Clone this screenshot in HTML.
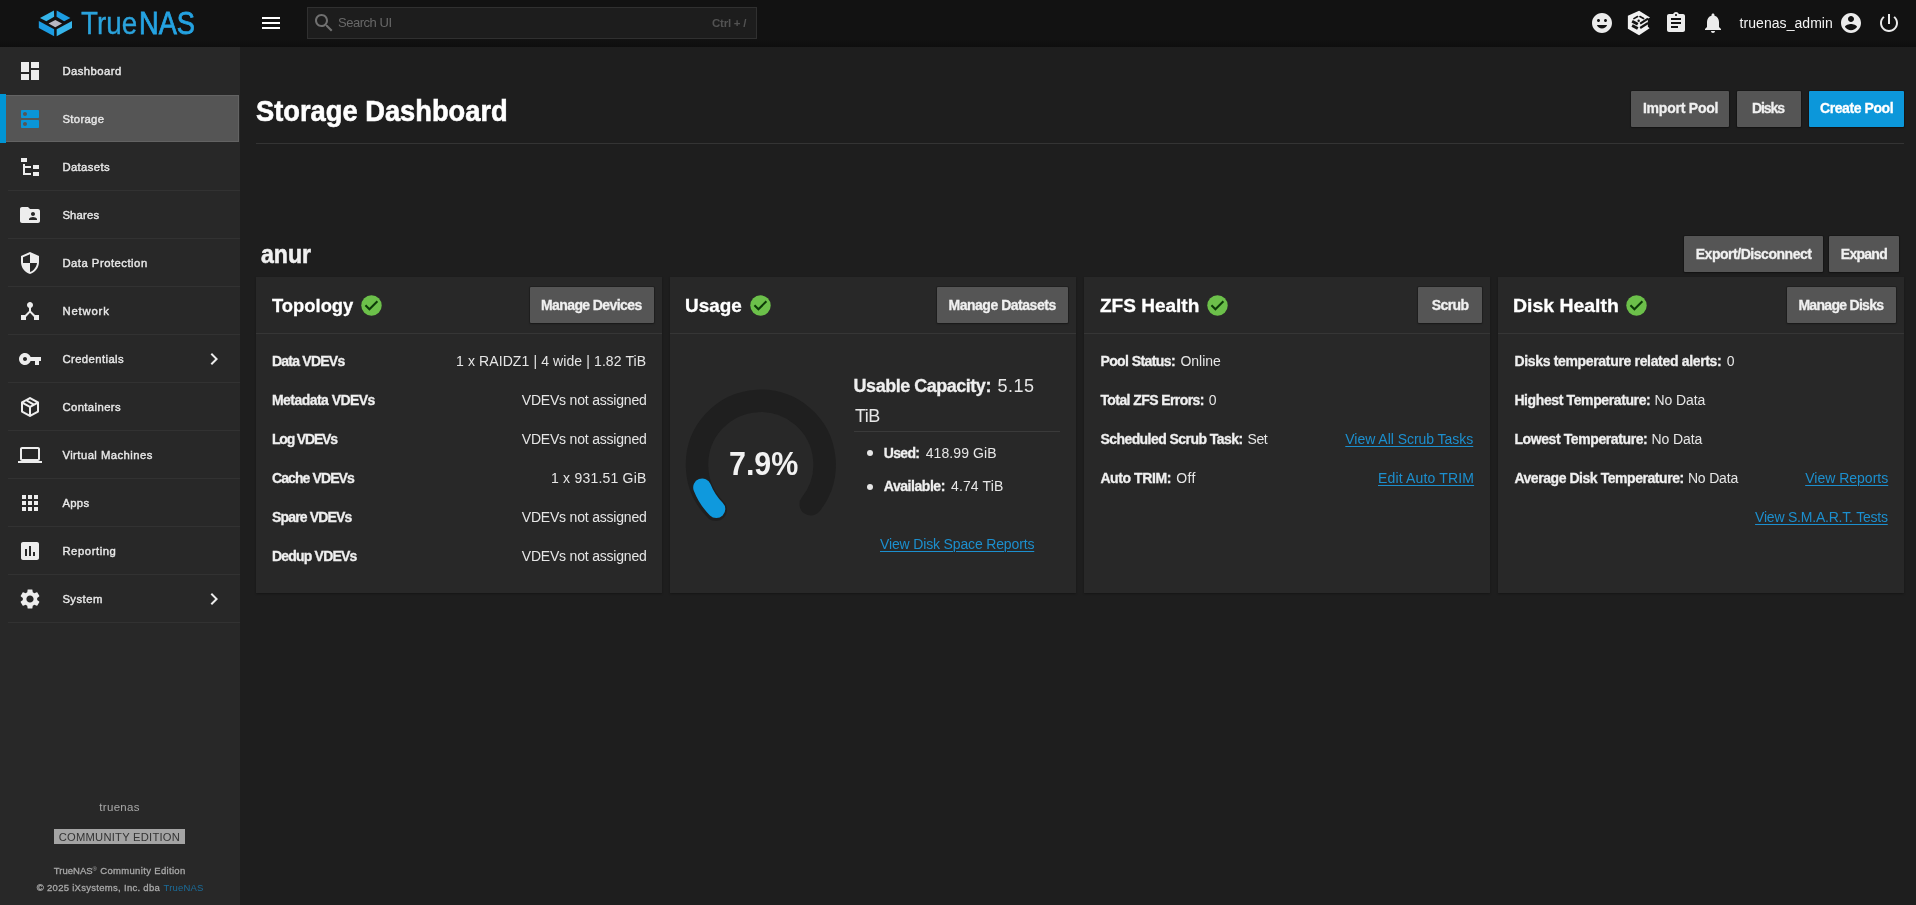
<!DOCTYPE html>
<html lang="en">
<head>
<meta charset="utf-8">
<title>TrueNAS - Storage Dashboard</title>
<style>
*{box-sizing:border-box;margin:0;padding:0}
html,body{width:1916px;height:905px;overflow:hidden;background:#1e1e1e;font-family:"Liberation Sans",sans-serif;color:#fff}
svg{display:block}
.abs{position:absolute}
.t{position:absolute;white-space:pre;line-height:1;font-family:"Liberation Sans",sans-serif}
.t.lk{text-decoration:underline;text-decoration-thickness:1px;text-underline-offset:2px}
#topbar{position:absolute;left:0;top:0;width:1916px;height:47px;background:linear-gradient(#121212 0,#121212 39px,#0e0e0e 47px)}
#search{position:absolute;left:307px;top:7px;width:450px;height:32px;background:#1d1d1d;border:1px solid #303030}
#sidebar{position:absolute;left:0;top:47px;width:240px;height:858px;background:#282828}
.ln{position:absolute;left:8px;width:232px;height:1px;background:#323232}
.ic{position:absolute;left:18px;width:24px;height:24px;fill:#ededed}
.navsel{position:absolute;left:0;width:239px;height:47px;background:#555;box-shadow:inset 0 0 0 1px #636363}
.navsel .bar{position:absolute;left:0;top:-1px;width:6px;height:49px;background:#0095d5}
#edition{position:absolute;left:54px;top:829px;width:131px;height:15px;background:#a4a4a4}
#hr{position:absolute;left:256px;top:143px;width:1648px;height:1px;background:#343434}
.btn{position:absolute;height:36px;background:#555;border-radius:1px;box-shadow:0 0 0 1px rgba(0,0,0,.16),0 1px 2px rgba(0,0,0,.3)}
.btn.pri{background:#0c97da}
.card{position:absolute;top:277px;width:406px;height:316px;background:#282828;box-shadow:0 1px 2px rgba(0,0,0,.3)}
.card .hd{position:absolute;left:0;top:56px;width:406px;height:1px;background:#363636}
#txt{position:absolute;left:0;top:0;width:1916px;height:905px;will-change:transform}
</style>
</head>
<body>
<div id="topbar">
  <svg class="abs" style="left:30px;top:2px" width="50" height="42" viewBox="0 0 1077 905">
    <polygon points="215,345 515,185 520,318 352,415" fill="#36b5ea"/>
    <polygon points="575,185 870,345 735,415 572,318" fill="#1c9ce2"/>
    <polygon points="190,410 520,585 520,738 190,562" fill="#1c9ce2"/>
    <polygon points="575,585 905,410 905,562 575,738" fill="#36b5ea"/>
    <polygon points="400,465 545,387 690,465 545,545" fill="#b8b8c2"/>
  </svg>
  <svg class="abs" style="left:259px;top:11px;fill:#fff" width="24" height="24" viewBox="0 0 24 24"><path d="M3 18h18v-2H3v2zm0-5h18v-2H3v2zm0-7v2h18V6H3z"/></svg>
  <div id="search">
    <svg class="abs" style="left:4px;top:3px;fill:#707070" width="24" height="24" viewBox="0 0 24 24"><path d="M15.5 14h-.79l-.28-.27C15.41 12.59 16 11.11 16 9.5 16 5.91 13.09 3 9.5 3S3 5.91 3 9.5 5.91 16 9.5 16c1.61 0 3.09-.59 4.23-1.57l.27.28v.79l5 4.99L20.49 19l-4.99-5zm-6 0C7.01 14 5 11.99 5 9.5S7.01 5 9.5 5 14 7.01 14 9.5 11.99 14 9.5 14z"/></svg>
  </div>
  <svg class="abs" style="left:1590px;top:11px;fill:#ececec" width="24" height="24" viewBox="0 0 24 24"><path d="M11.99 2C6.47 2 2 6.48 2 12s4.47 10 9.99 10C17.52 22 22 17.52 22 12S17.52 2 11.99 2zM8.5 8c.83 0 1.5.67 1.5 1.5S9.33 11 8.5 11 7 10.33 7 9.5 7.67 8 8.5 8zm3.500 9.500c-2.330 0-4.320-1.450-5.120-3.500h10.240c-.8 2.050-2.790 3.500-5.120 3.500zm3.500-6.500c-.83 0-1.500-.67-1.500-1.500S14.670 8 15.500 8s1.500.67 1.500 1.500-.67 1.500-1.500 1.500z"/></svg>
  <svg class="abs" style="left:1620px;top:4px" width="40" height="36" viewBox="0 0 1006 905">
    <polygon points="480,172 755,338 700,372 700,575 745,612 480,785 198,622 198,298" fill="#f2f2f2"/>
    <g fill="none" stroke="#141414">
      <path d="M350 368L442 316M502 316L592 366" stroke-width="42" stroke-linecap="round"/>
      <path d="M305 432L447 508M305 542L447 618" stroke-width="72"/>
      <path d="M507 492L705 368M507 602L705 478" stroke-width="56"/>
    </g>
    <circle cx="470" cy="420" r="30" fill="#141414"/>
  </svg>
  <svg class="abs" style="left:1664px;top:11px;fill:#ececec" width="24" height="24" viewBox="0 0 24 24"><path d="M19 3h-4.180C14.400 1.840 13.300 1 12 1c-1.300 0-2.400.84-2.820 2H5c-1.100 0-2 .9-2 2v14c0 1.100.9 2 2 2h14c1.100 0 2-.9 2-2V5c0-1.100-.9-2-2-2zm-7 0c.55 0 1 .45 1 1s-.45 1-1 1-1-.45-1-1 .45-1 1-1zm2 14H7v-2h7v2zm3-4H7v-2h10v2zm0-4H7V7h10v2z"/></svg>
  <svg class="abs" style="left:1701px;top:11px;fill:#ececec" width="24" height="24" viewBox="0 0 24 24"><path d="M12 22c1.100 0 2-.9 2-2h-4c0 1.100.89 2 2 2zm6-6v-5c0-3.070-1.640-5.640-4.500-6.320V4c0-.83-.67-1.500-1.500-1.500s-1.500.67-1.500 1.500v.68C7.630 5.360 6 7.920 6 11v5l-2 2v1h16v-1l-2-2z"/></svg>
  <svg class="abs" style="left:1839px;top:11px;fill:#ececec" width="24" height="24" viewBox="0 0 24 24"><path d="M12 2C6.480 2 2 6.480 2 12s4.480 10 10 10 10-4.480 10-10S17.520 2 12 2zm0 3c1.660 0 3 1.340 3 3s-1.340 3-3 3-3-1.340-3-3 1.340-3 3-3zm0 14.200c-2.500 0-4.710-1.280-6-3.220.03-1.990 4-3.080 6-3.080 1.990 0 5.970 1.090 6 3.080-1.290 1.940-3.500 3.220-6 3.220z"/></svg>
  <svg class="abs" style="left:1877px;top:11px;fill:#ececec" width="24" height="24" viewBox="0 0 24 24"><path d="M13 3h-2v10h2V3zm4.830 2.170l-1.420 1.420C17.990 7.860 19 9.810 19 12c0 3.870-3.130 7-7 7s-7-3.130-7-7c0-2.190 1.010-4.140 2.580-5.420L6.170 5.170C4.230 6.820 3 9.260 3 12c0 4.970 4.030 9 9 9s9-4.030 9-9c0-2.740-1.230-5.180-3.170-6.830z"/></svg>
</div>
<div id="sidebar"></div>
<svg class="ic" style="top:59px;fill:#ededed" viewBox="0 0 24 24"><path d="M3 13h8V3H3v10zm0 8h8v-6H3v6zm10 0h8V11h-8v10zm0-18v6h8V3h-8z"/></svg>
<div class="navsel" style="top:95px"><div class="bar"></div></div>
<svg class="ic" style="top:107px;fill:#0a95d7" viewBox="0 0 24 24"><path d="M20 13H4c-.55 0-1 .45-1 1v6c0 .55.45 1 1 1h16c.55 0 1-.45 1-1v-6c0-.55-.45-1-1-1zM7 19c-1.1 0-2-.9-2-2s.9-2 2-2 2 .9 2 2-.9 2-2 2zM20 3H4c-.55 0-1 .45-1 1v6c0 .55.45 1 1 1h16c.55 0 1-.45 1-1V4c0-.55-.45-1-1-1zM7 9c-1.1 0-2-.9-2-2s.9-2 2-2 2 .9 2 2-.9 2-2 2z"/></svg>
<svg class="ic" style="top:155px;fill:#ededed" viewBox="0 0 24 24"><path d="M3,3H9V7H3V3M15,10H21V14H15V10M15,17H21V21H15V17M13,13H7V18H13V20H7L5,20V9H7V11H13V13Z"/></svg>
<div class="ln" style="top:190px"></div>
<svg class="ic" style="top:203px;fill:#ededed" viewBox="0 0 24 24"><path d="M20 6h-8l-2-2H4c-1.1 0-1.99.9-1.99 2L2 18c0 1.1.9 2 2 2h16c1.1 0 2-.9 2-2V8c0-1.1-.9-2-2-2zm-5 3c1.1 0 2 .9 2 2s-.9 2-2 2-2-.9-2-2 .9-2 2-2zm4 8h-8v-1c0-1.33 2.67-2 4-2s4 .67 4 2v1z"/></svg>
<div class="ln" style="top:238px"></div>
<svg class="ic" style="top:251px;fill:#ededed" viewBox="0 0 24 24"><path d="M12 1L3 5v6c0 5.55 3.84 10.74 9 12 5.16-1.26 9-6.45 9-12V5l-9-4zm0 10.99h7c-.53 4.12-3.28 7.79-7 8.94V12H5V6.3l7-3.11v8.8z"/></svg>
<div class="ln" style="top:286px"></div>
<svg class="ic" style="top:299px;fill:#ededed" viewBox="0 0 24 24"><path d="M17 16l-4-4V8.82C14.16 8.4 15 7.3 15 6c0-1.66-1.34-3-3-3S9 4.34 9 6c0 1.3.84 2.4 2 2.82V12l-4 4H3v5h5v-3.05l4-4.2 4 4.2V21h5v-5h-4z"/></svg>
<div class="ln" style="top:334px"></div>
<svg class="ic" style="top:347px;fill:#ededed" viewBox="0 0 24 24"><path d="M12.65 10C11.83 7.67 9.61 6 7 6c-3.31 0-6 2.69-6 6s2.69 6 6 6c2.61 0 4.83-1.67 5.65-4H17v4h4v-4h2v-4H12.65zM7 14c-1.1 0-2-.9-2-2s.9-2 2-2 2 .9 2 2-.9 2-2 2z"/></svg>
<svg class="ic" style="left:202px;top:347px" viewBox="0 0 24 24"><path d="M10 6L8.59 7.41 13.17 12l-4.58 4.59L10 18l6-6z"/></svg>
<div class="ln" style="top:382px"></div>
<svg class="ic" style="top:395px;fill:#ededed" viewBox="0 0 24 24"><path d="M21,16.5C21,16.88 20.79,17.21 20.47,17.38L12.57,21.82C12.41,21.94 12.21,22 12,22C11.79,22 11.59,21.94 11.43,21.82L3.53,17.38C3.21,17.21 3,16.88 3,16.5V7.5C3,7.12 3.21,6.79 3.53,6.62L11.43,2.18C11.59,2.06 11.79,2 12,2C12.21,2 12.41,2.06 12.57,2.18L20.47,6.62C20.79,6.79 21,7.12 21,7.5V16.5M12,4.15L10.11,5.22L16,8.61L17.96,7.5L12,4.15M6.04,7.5L12,10.85L13.96,9.75L8.08,6.35L6.04,7.5M5,15.91L11,19.29V12.58L5,9.21V15.91M19,15.91V9.21L13,12.58V19.29L19,15.91Z"/></svg>
<div class="ln" style="top:430px"></div>
<svg class="ic" style="top:443px;fill:#ededed" viewBox="0 0 24 24"><path d="M20 18c1.1 0 1.99-.9 1.99-2L22 6c0-1.1-.9-2-2-2H4c-1.1 0-2 .9-2 2v10c0 1.1.9 2 2 2H0v2h24v-2h-4zM4 6h16v10H4V6z"/></svg>
<div class="ln" style="top:478px"></div>
<svg class="ic" style="top:491px;fill:#ededed" viewBox="0 0 24 24"><path d="M4 8h4V4H4v4zm6 12h4v-4h-4v4zm-6 0h4v-4H4v4zm0-6h4v-4H4v4zm6 0h4v-4h-4v4zm6-10v4h4V4h-4zm-6 4h4V4h-4v4zm6 6h4v-4h-4v4zm0 6h4v-4h-4v4z"/></svg>
<div class="ln" style="top:526px"></div>
<svg class="ic" style="top:539px;fill:#ededed" viewBox="0 0 24 24"><path d="M19 3H5c-1.1 0-2 .9-2 2v14c0 1.1.9 2 2 2h14c1.1 0 2-.9 2-2V5c0-1.1-.9-2-2-2zM9 17H7v-7h2v7zm4 0h-2V7h2v10zm4 0h-2v-4h2v4z"/></svg>
<div class="ln" style="top:574px"></div>
<svg class="ic" style="top:587px;fill:#ededed" viewBox="0 0 24 24"><path d="M19.14 12.94c.04-.3.06-.61.06-.94 0-.32-.02-.64-.07-.94l2.03-1.58c.18-.14.23-.41.12-.61l-1.92-3.32c-.12-.22-.37-.29-.59-.22l-2.39.96c-.5-.38-1.03-.7-1.62-.94l-.36-2.54c-.04-.24-.24-.41-.48-.41h-3.84c-.24 0-.43.17-.47.41l-.36 2.54c-.59.24-1.13.57-1.62.94l-2.39-.96c-.22-.08-.47 0-.59.22L2.74 8.87c-.12.21-.08.47.12.61l2.03 1.58c-.05.3-.09.63-.09.94s.02.64.07.94l-2.03 1.58c-.18.14-.23.41-.12.61l1.92 3.32c.12.22.37.29.59.22l2.39-.96c.5.38 1.03.7 1.62.94l.36 2.54c.05.24.24.41.48.41h3.84c.24 0 .44-.17.47-.41l.36-2.54c.59-.24 1.13-.56 1.62-.94l2.39.96c.22.08.47 0 .59-.22l1.92-3.32c.12-.22.07-.47-.12-.61l-2.01-1.58zM12 15.6c-1.98 0-3.6-1.62-3.6-3.6s1.62-3.6 3.6-3.6 3.6 1.62 3.6 3.6-1.62 3.6-3.6 3.6z"/></svg>
<svg class="ic" style="left:202px;top:587px" viewBox="0 0 24 24"><path d="M10 6L8.59 7.41 13.17 12l-4.58 4.59L10 18l6-6z"/></svg>
<div class="ln" style="top:622px"></div>
<div id="edition"></div>
<div id="hr"></div>
<div class="btn" style="left:1631px;top:91px;width:98px"></div>
<div class="btn" style="left:1737px;top:91px;width:64px"></div>
<div class="btn pri" style="left:1809px;top:91px;width:95px"></div>
<div class="btn" style="left:1684px;top:236px;width:139px"></div>
<div class="btn" style="left:1829px;top:236px;width:70px"></div>
<div class="card" style="left:256px"><div class="hd"></div></div>
<div class="card" style="left:670px"><div class="hd"></div></div>
<div class="card" style="left:1084px"><div class="hd"></div></div>
<div class="card" style="left:1498px"><div class="hd"></div></div>
<div class="btn" style="left:530px;top:287px;width:124px"></div>
<div class="btn" style="left:937px;top:287px;width:131px"></div>
<div class="btn" style="left:1418px;top:287px;width:64px"></div>
<div class="btn" style="left:1787px;top:287px;width:109px"></div>
<svg class="abs" style="left:359.4px;top:292.7px" width="25" height="25" viewBox="0 0 24 24"><circle cx="12" cy="12" r="9.8" fill="#6cc04a"/><circle cx="12" cy="12" r="8.1" fill="none" stroke="#2f7a22" stroke-width="0"/><path d="M6.2 11.8L10 15.55 17.66 7.97" fill="none" stroke="#0d3a08" stroke-width="2"/></svg>
<svg class="abs" style="left:747.6px;top:292.7px" width="25" height="25" viewBox="0 0 24 24"><circle cx="12" cy="12" r="9.8" fill="#6cc04a"/><circle cx="12" cy="12" r="8.1" fill="none" stroke="#2f7a22" stroke-width="0"/><path d="M6.2 11.8L10 15.55 17.66 7.97" fill="none" stroke="#0d3a08" stroke-width="2"/></svg>
<svg class="abs" style="left:1205.1px;top:292.7px" width="25" height="25" viewBox="0 0 24 24"><circle cx="12" cy="12" r="9.8" fill="#6cc04a"/><circle cx="12" cy="12" r="8.1" fill="none" stroke="#2f7a22" stroke-width="0"/><path d="M6.2 11.8L10 15.55 17.66 7.97" fill="none" stroke="#0d3a08" stroke-width="2"/></svg>
<svg class="abs" style="left:1623.8px;top:292.7px" width="25" height="25" viewBox="0 0 24 24"><circle cx="12" cy="12" r="9.8" fill="#6cc04a"/><circle cx="12" cy="12" r="8.1" fill="none" stroke="#2f7a22" stroke-width="0"/><path d="M6.2 11.8L10 15.55 17.66 7.97" fill="none" stroke="#0d3a08" stroke-width="2"/></svg>
<svg class="abs" style="left:0;top:0" width="1916" height="905" viewBox="0 0 1916 905"><path d="M715.69 509.71A63.8 63.8 0 1 1 810.73 504.32" fill="none" stroke="#1f1f1f" stroke-width="22.5" stroke-linecap="round"/><path d="M716.32 509.08A62.9 62.9 0 0 1 702.20 487.45" fill="none" stroke="#0f99dd" stroke-width="18" stroke-linecap="round"/></svg>
<div class="abs" style="left:854px;top:431px;width:206px;height:1px;background:#3a3a3a"></div>
<div class="abs" style="left:867.3px;top:450.3px;width:6px;height:6px;border-radius:3px;background:#e6e6e6"></div>
<div class="abs" style="left:867.3px;top:483.6px;width:6px;height:6px;border-radius:3px;background:#e6e6e6"></div>
<div id="txt">
<span class="t" style="left:80.80px;top:6px;line-height:35px;font-size:31px;transform:scaleX(0.8965);transform-origin:0 0;color:#2ba3dc;-webkit-text-stroke:0.35px #2ba3dc;">True</span>
<span class="t" style="left:139.24px;top:6px;line-height:35px;font-size:31px;transform:scaleX(0.8778);transform-origin:0 0;color:#25a3e2;-webkit-text-stroke:0.8px #25a3e2;">NAS</span>
<span class="t" style="left:338.00px;top:15px;line-height:15px;font-size:13px;letter-spacing:-0.474px;color:#686868;">Search UI</span>
<span class="t" style="left:712.00px;top:17px;line-height:12px;font-size:11.5px;font-weight:bold;letter-spacing:-0.230px;color:#525252;-webkit-text-stroke:0;">Ctrl + /</span>
<span class="t" style="left:1739.60px;top:15px;line-height:16px;font-size:14px;letter-spacing:0.048px;color:#f4f4f4;">truenas_admin</span>
<span class="t" style="left:62.40px;top:65px;line-height:12px;font-size:11.3px;letter-spacing:0.452px;color:#e8e8e8;-webkit-text-stroke:0.4px #e8e8e8;">Dashboard</span>
<span class="t" style="left:62.40px;top:113px;line-height:12px;font-size:11.3px;letter-spacing:0.344px;color:#e8e8e8;-webkit-text-stroke:0.4px #e8e8e8;">Storage</span>
<span class="t" style="left:62.40px;top:161px;line-height:12px;font-size:11.3px;letter-spacing:0.381px;color:#e8e8e8;-webkit-text-stroke:0.4px #e8e8e8;">Datasets</span>
<span class="t" style="left:62.40px;top:209px;line-height:12px;font-size:11.3px;letter-spacing:0.171px;color:#e8e8e8;-webkit-text-stroke:0.4px #e8e8e8;">Shares</span>
<span class="t" style="left:62.40px;top:257px;line-height:12px;font-size:11.3px;letter-spacing:0.494px;color:#e8e8e8;-webkit-text-stroke:0.4px #e8e8e8;">Data Protection</span>
<span class="t" style="left:62.40px;top:305px;line-height:12px;font-size:11.3px;letter-spacing:0.836px;color:#e8e8e8;-webkit-text-stroke:0.4px #e8e8e8;">Network</span>
<span class="t" style="left:62.40px;top:353px;line-height:12px;font-size:11.3px;letter-spacing:0.411px;color:#e8e8e8;-webkit-text-stroke:0.4px #e8e8e8;">Credentials</span>
<span class="t" style="left:62.40px;top:401px;line-height:12px;font-size:11.3px;letter-spacing:0.402px;color:#e8e8e8;-webkit-text-stroke:0.4px #e8e8e8;">Containers</span>
<span class="t" style="left:62.40px;top:449px;line-height:12px;font-size:11.3px;letter-spacing:0.446px;color:#e8e8e8;-webkit-text-stroke:0.4px #e8e8e8;">Virtual Machines</span>
<span class="t" style="left:62.40px;top:497px;line-height:12px;font-size:11.3px;letter-spacing:0.300px;color:#e8e8e8;-webkit-text-stroke:0.4px #e8e8e8;">Apps</span>
<span class="t" style="left:62.40px;top:545px;line-height:12px;font-size:11.3px;letter-spacing:0.563px;color:#e8e8e8;-webkit-text-stroke:0.4px #e8e8e8;">Reporting</span>
<span class="t" style="left:62.40px;top:593px;line-height:12px;font-size:11.3px;letter-spacing:0.449px;color:#e8e8e8;-webkit-text-stroke:0.4px #e8e8e8;">System</span>
<span class="t" style="left:99.30px;top:801px;line-height:12px;font-size:11.5px;letter-spacing:0.315px;color:#a8a8a8;">truenas</span>
<span class="t" style="left:58.70px;top:831px;line-height:12px;font-size:11.2px;letter-spacing:0.245px;color:#333;">COMMUNITY EDITION</span>
<span class="t" style="left:53.70px;top:865px;line-height:11px;font-size:9.5px;letter-spacing:0.037px;color:#a8a8a8;-webkit-text-stroke:0.3px #a8a8a8;">TrueNAS</span>
<span class="t" style="left:92.60px;top:866px;line-height:6px;font-size:6px;color:#a8a8a8;">®</span>
<span class="t" style="left:100.20px;top:865px;line-height:11px;font-size:9.5px;letter-spacing:0.335px;color:#a8a8a8;-webkit-text-stroke:0.3px #a8a8a8;">Community Edition</span>
<span class="t" style="left:36.80px;top:882px;line-height:11px;font-size:9.5px;letter-spacing:0.288px;color:#a8a8a8;-webkit-text-stroke:0.3px #a8a8a8;">© 2025 iXsystems, Inc. dba</span>
<span class="t" style="left:163.50px;top:882px;line-height:11px;font-size:9.5px;letter-spacing:0.187px;color:#1b6d9b;">TrueNAS</span>
<span class="t" style="left:256.20px;top:95px;line-height:32px;font-size:28.8px;font-weight:bold;transform:scaleX(0.9476);transform-origin:0 0;color:#fff;-webkit-text-stroke:0.6px #fff;">Storage Dashboard</span>
<span class="t" style="left:1642.90px;top:100px;line-height:16px;font-size:14px;font-weight:bold;letter-spacing:-0.218px;-webkit-text-stroke:0.3px #f0f0f0;color:#f0f0f0;">Import Pool</span>
<span class="t" style="left:1752.00px;top:100px;line-height:16px;font-size:14px;font-weight:bold;letter-spacing:-1.068px;-webkit-text-stroke:0.3px #f0f0f0;color:#f0f0f0;">Disks</span>
<span class="t" style="left:1820.00px;top:100px;line-height:16px;font-size:14px;font-weight:bold;letter-spacing:-0.421px;-webkit-text-stroke:0.3px #fff;color:#fff;">Create Pool</span>
<span class="t" style="left:261.00px;top:239px;line-height:30px;font-size:26px;font-weight:bold;transform:scaleX(0.8893);transform-origin:0 0;color:#f0f0f0;-webkit-text-stroke:0.55px #f0f0f0;">anur</span>
<span class="t" style="left:1695.70px;top:246px;line-height:16px;font-size:14px;font-weight:bold;letter-spacing:-0.464px;-webkit-text-stroke:0.3px #f0f0f0;color:#f0f0f0;">Export/Disconnect</span>
<span class="t" style="left:1840.80px;top:246px;line-height:16px;font-size:14px;font-weight:bold;letter-spacing:-0.723px;-webkit-text-stroke:0.3px #f0f0f0;color:#f0f0f0;">Expand</span>
<span class="t" style="left:272.00px;top:295px;line-height:21px;font-size:18.5px;font-weight:bold;transform:scaleX(0.9931);transform-origin:0 0;color:#fff;-webkit-text-stroke:0.3px #fff;">Topology</span>
<span class="t" style="left:685.38px;top:295px;line-height:21px;font-size:18.5px;font-weight:bold;transform:scaleX(1.0214);transform-origin:0 0;color:#fff;-webkit-text-stroke:0.3px #fff;">Usage</span>
<span class="t" style="left:1100.40px;top:295px;line-height:21px;font-size:18.5px;font-weight:bold;transform:scaleX(1.0278);transform-origin:0 0;color:#fff;-webkit-text-stroke:0.3px #fff;">ZFS Health</span>
<span class="t" style="left:1513.35px;top:295px;line-height:21px;font-size:18.5px;font-weight:bold;transform:scaleX(1.0497);transform-origin:0 0;color:#fff;-webkit-text-stroke:0.3px #fff;">Disk Health</span>
<span class="t" style="left:541.00px;top:297px;line-height:16px;font-size:14px;font-weight:bold;letter-spacing:-0.597px;-webkit-text-stroke:0.3px #f0f0f0;color:#f0f0f0;">Manage Devices</span>
<span class="t" style="left:948.50px;top:297px;line-height:16px;font-size:14px;font-weight:bold;letter-spacing:-0.478px;-webkit-text-stroke:0.3px #f0f0f0;color:#f0f0f0;">Manage Datasets</span>
<span class="t" style="left:1431.70px;top:297px;line-height:16px;font-size:14px;font-weight:bold;letter-spacing:-0.581px;-webkit-text-stroke:0.3px #f0f0f0;color:#f0f0f0;">Scrub</span>
<span class="t" style="left:1798.40px;top:297px;line-height:16px;font-size:14px;font-weight:bold;letter-spacing:-0.699px;-webkit-text-stroke:0.3px #f0f0f0;color:#f0f0f0;">Manage Disks</span>
<span class="t" style="left:272.00px;top:353px;line-height:16px;font-size:14px;font-weight:bold;letter-spacing:-0.773px;-webkit-text-stroke:0.3px #efefef;color:#efefef;">Data VDEVs</span>
<span class="t" style="left:456.00px;top:353px;line-height:16px;font-size:14px;letter-spacing:0.106px;color:#e6e6e6;">1 x RAIDZ1 | 4 wide | 1.82 TiB</span>
<span class="t" style="left:272.00px;top:392px;line-height:16px;font-size:14px;font-weight:bold;letter-spacing:-0.546px;-webkit-text-stroke:0.3px #efefef;color:#efefef;">Metadata VDEVs</span>
<span class="t" style="left:521.80px;top:392px;line-height:16px;font-size:14px;letter-spacing:-0.201px;color:#e6e6e6;">VDEVs not assigned</span>
<span class="t" style="left:272.00px;top:431px;line-height:16px;font-size:14px;font-weight:bold;letter-spacing:-1.184px;-webkit-text-stroke:0.3px #efefef;color:#efefef;">Log VDEVs</span>
<span class="t" style="left:521.80px;top:431px;line-height:16px;font-size:14px;letter-spacing:-0.201px;color:#e6e6e6;">VDEVs not assigned</span>
<span class="t" style="left:272.00px;top:470px;line-height:16px;font-size:14px;font-weight:bold;letter-spacing:-0.903px;-webkit-text-stroke:0.3px #efefef;color:#efefef;">Cache VDEVs</span>
<span class="t" style="left:551.00px;top:470px;line-height:16px;font-size:14px;letter-spacing:0.210px;color:#e6e6e6;">1 x 931.51 GiB</span>
<span class="t" style="left:272.00px;top:509px;line-height:16px;font-size:14px;font-weight:bold;letter-spacing:-0.832px;-webkit-text-stroke:0.3px #efefef;color:#efefef;">Spare VDEVs</span>
<span class="t" style="left:521.80px;top:509px;line-height:16px;font-size:14px;letter-spacing:-0.201px;color:#e6e6e6;">VDEVs not assigned</span>
<span class="t" style="left:272.00px;top:548px;line-height:16px;font-size:14px;font-weight:bold;letter-spacing:-0.807px;-webkit-text-stroke:0.3px #efefef;color:#efefef;">Dedup VDEVs</span>
<span class="t" style="left:521.80px;top:548px;line-height:16px;font-size:14px;letter-spacing:-0.201px;color:#e6e6e6;">VDEVs not assigned</span>
<span class="t" style="left:728.96px;top:446px;line-height:36px;font-size:32.3px;font-weight:bold;transform:scaleX(0.9416);transform-origin:0 0;color:#f2f2f2;">7.9%</span>
<span class="t" style="left:853.60px;top:376px;line-height:20px;font-size:18px;font-weight:bold;letter-spacing:-0.484px;-webkit-text-stroke:0.3px #efefef;color:#efefef;">Usable Capacity:</span>
<span class="t" style="left:997.40px;top:376px;line-height:20px;font-size:18px;letter-spacing:0.526px;color:#e6e6e6;">5.15</span>
<span class="t" style="left:855.00px;top:406px;line-height:20px;font-size:18px;letter-spacing:-0.513px;color:#e6e6e6;">TiB</span>
<span class="t" style="left:883.80px;top:445px;line-height:16px;font-size:14px;font-weight:bold;letter-spacing:-0.684px;-webkit-text-stroke:0.3px #efefef;color:#efefef;">Used:</span>
<span class="t" style="left:925.70px;top:445px;line-height:16px;font-size:14px;letter-spacing:0.099px;color:#e6e6e6;">418.99 GiB</span>
<span class="t" style="left:883.80px;top:478px;line-height:16px;font-size:14px;font-weight:bold;letter-spacing:-0.451px;-webkit-text-stroke:0.3px #efefef;color:#efefef;">Available:</span>
<span class="t" style="left:951.00px;top:478px;line-height:16px;font-size:14px;letter-spacing:0.131px;color:#e6e6e6;">4.74 TiB</span>
<span class="t lk" style="left:880.00px;top:536px;line-height:16px;font-size:14px;letter-spacing:-0.150px;color:#1c8fce;">View Disk Space Reports</span>
<span class="t" style="left:1100.40px;top:353px;line-height:16px;font-size:14px;font-weight:bold;letter-spacing:-0.582px;-webkit-text-stroke:0.3px #efefef;color:#efefef;">Pool Status:</span>
<span class="t" style="left:1180.40px;top:353px;line-height:16px;font-size:14px;letter-spacing:-0.017px;color:#e6e6e6;">Online</span>
<span class="t" style="left:1100.40px;top:392px;line-height:16px;font-size:14px;font-weight:bold;letter-spacing:-0.578px;-webkit-text-stroke:0.3px #efefef;color:#efefef;">Total ZFS Errors:</span>
<span class="t" style="left:1208.80px;top:392px;line-height:16px;font-size:14px;color:#e6e6e6;">0</span>
<span class="t" style="left:1100.40px;top:431px;line-height:16px;font-size:14px;font-weight:bold;letter-spacing:-0.556px;-webkit-text-stroke:0.3px #efefef;color:#efefef;">Scheduled Scrub Task:</span>
<span class="t" style="left:1247.50px;top:431px;line-height:16px;font-size:14px;letter-spacing:-0.412px;color:#e6e6e6;">Set</span>
<span class="t lk" style="left:1345.30px;top:431px;line-height:16px;font-size:14px;letter-spacing:-0.036px;color:#1c8fce;">View All Scrub Tasks</span>
<span class="t" style="left:1100.40px;top:470px;line-height:16px;font-size:14px;font-weight:bold;letter-spacing:-0.409px;-webkit-text-stroke:0.3px #efefef;color:#efefef;">Auto TRIM:</span>
<span class="t" style="left:1176.30px;top:470px;line-height:16px;font-size:14px;letter-spacing:0.287px;color:#e6e6e6;">Off</span>
<span class="t lk" style="left:1378.00px;top:470px;line-height:16px;font-size:14px;letter-spacing:0.157px;color:#1c8fce;">Edit Auto TRIM</span>
<span class="t" style="left:1514.40px;top:353px;line-height:16px;font-size:14px;font-weight:bold;letter-spacing:-0.329px;-webkit-text-stroke:0.3px #efefef;color:#efefef;">Disks temperature related alerts:</span>
<span class="t" style="left:1726.80px;top:353px;line-height:16px;font-size:14px;color:#e6e6e6;">0</span>
<span class="t" style="left:1514.40px;top:392px;line-height:16px;font-size:14px;font-weight:bold;letter-spacing:-0.384px;-webkit-text-stroke:0.3px #efefef;color:#efefef;">Highest Temperature:</span>
<span class="t" style="left:1654.50px;top:392px;line-height:16px;font-size:14px;letter-spacing:-0.079px;color:#e6e6e6;">No Data</span>
<span class="t" style="left:1514.40px;top:431px;line-height:16px;font-size:14px;font-weight:bold;letter-spacing:-0.399px;-webkit-text-stroke:0.3px #efefef;color:#efefef;">Lowest Temperature:</span>
<span class="t" style="left:1651.50px;top:431px;line-height:16px;font-size:14px;letter-spacing:-0.079px;color:#e6e6e6;">No Data</span>
<span class="t" style="left:1514.40px;top:470px;line-height:16px;font-size:14px;font-weight:bold;letter-spacing:-0.448px;-webkit-text-stroke:0.3px #efefef;color:#efefef;">Average Disk Temperature:</span>
<span class="t" style="left:1687.90px;top:470px;line-height:16px;font-size:14px;letter-spacing:-0.179px;color:#e6e6e6;">No Data</span>
<span class="t lk" style="left:1805.20px;top:470px;line-height:16px;font-size:14px;color:#1c8fce;">View Reports</span>
<span class="t lk" style="left:1755.10px;top:509px;line-height:16px;font-size:14px;letter-spacing:-0.217px;color:#1c8fce;">View S.M.A.R.T. Tests</span>
</div>
</body>
</html>
